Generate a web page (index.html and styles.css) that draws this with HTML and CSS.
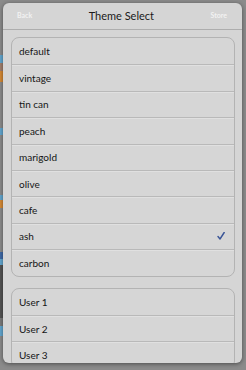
FILE: index.html
```html
<!DOCTYPE html>
<html lang="en">
  <head>
    <meta charset="UTF-8" />
    <meta name="viewport" content="width=device-width, initial-scale=1.0" />
    <title>Theme Select</title>
    <link rel="stylesheet" href="styles.css">
  </head>
  <body>
    <div class="popover">
      <div class="nav-bar">
        <span class="nav-btn">Back</span>
        <span class="nav-title">Theme Select</span>
        <span class="nav-btn">Store</span>
      </div>

      <div class="content">
        <ul class="group">
          <li class="row">default</li>
          <li class="row">vintage</li>
          <li class="row">tin can</li>
          <li class="row">peach</li>
          <li class="row">marigold</li>
          <li class="row">olive</li>
          <li class="row">cafe</li>
          <li class="row selected">ash
            <svg class="check" width="8" height="8" viewBox="0 0 8 8">
              <path d="M1 4.5 L3 7 L7.2 0.5" fill="none" stroke="#3a5597" stroke-width="1.4" stroke-linecap="round" stroke-linejoin="round"/>
            </svg>
          </li>
          <li class="row">carbon</li>
        </ul>

        <ul class="group">
          <li class="row">User 1</li>
          <li class="row">User 2</li>
          <li class="row">User 3</li>
        </ul>
      </div>
    </div>
  </body>
</html>
```

FILE: styles.css
```css
* {
  box-sizing: border-box;
}

body {
  margin: 0;
  height: 370px;
  overflow: hidden;
  background-color: #8b8b8b;
  /* bits of the dimmed app peeking out on the left */
  background-image: linear-gradient(
    to bottom,
    #8b8b8b 0 55px,
    #63a7d0 55px 63px,
    #a2806e 63px 71px,
    #d68a35 71px 82px,
    #8b8b8b 82px 128px,
    #63a7d0 128px 135px,
    #8b8b8b 135px 195px,
    #63a7d0 195px 200px,
    #d68a35 200px 208px,
    #8b8b8b 208px 252px,
    #3f6aa8 252px 259px,
    #63a7d0 259px 265px,
    #535353 265px 318px,
    #7a7a7a 318px 326px,
    #63a7d0 326px 336px,
    #8b8b8b 336px
  );
  background-size: 3px 100%;
  background-repeat: no-repeat;
  font-family: "Lato", "Noto Sans", sans-serif;
  color: #151515;
}

.popover {
  margin: 3px 0 0 3px;
  width: 239px;
  height: 360px;
  border-radius: 6px;
  background: #d5d5d5;
  box-shadow: 0 1px 4px rgba(0, 0, 0, 0.45);
  overflow: hidden;
}

.nav-bar {
  height: 27px;
  display: flex;
  align-items: center;
  justify-content: space-between;
  padding: 0 15px 2px 14px;
  border-bottom: 1px solid #adadad;
}

.nav-btn {
  font-size: 7px;
  font-weight: 700;
  color: #f2f2f2;
}

.nav-title {
  font-size: 11px;
  color: #1a1a1a;
}

.content {
  padding: 7px 7px 0 8px;
  display: flex;
  flex-direction: column;
  gap: 11px;
}

.group {
  list-style: none;
  margin: 0;
  padding: 0;
  border: 1px solid #b3b3b3;
  border-radius: 8px;
  background: #d6d6d6;
}

.row {
  height: 26.4px;
  display: flex;
  align-items: center;
  justify-content: space-between;
  padding: 0 9px 0 7px;
  font-size: 10px;
}

.row + .row {
  border-top: 1px solid #b9b9b9;
  box-shadow: inset 0 1px 0 #e0e0e0;
}

.check {
  display: block;
}
```
